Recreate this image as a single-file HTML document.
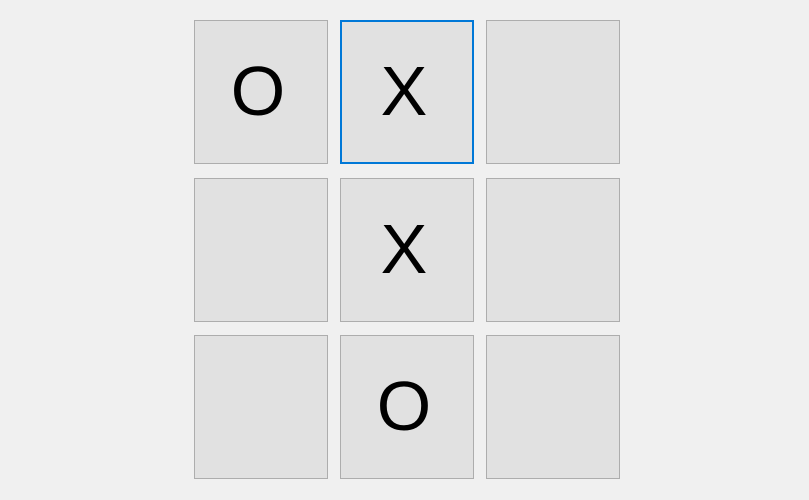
<!DOCTYPE html><html><head><style>
body{margin:0;width:809px;height:500px;background:#f0f0f0;position:relative;overflow:hidden;font-family:"Liberation Sans",sans-serif}
.b{position:absolute;width:134px;height:144px;box-sizing:border-box;border:1px solid #adadad;background:#e1e1e1;display:flex;align-items:center;justify-content:center;font-size:70px;color:#000;line-height:1;padding-right:6px;padding-bottom:2px}
.f{border:2px solid #0078d7}
</style></head><body>
<div class="b" style="left:194px;top:20px">O</div>
<div class="b f" style="left:340px;top:20px">X</div>
<div class="b" style="left:486px;top:20px"></div>
<div class="b" style="left:194px;top:178px"></div>
<div class="b" style="left:340px;top:178px">X</div>
<div class="b" style="left:486px;top:178px"></div>
<div class="b" style="left:194px;top:335px"></div>
<div class="b" style="left:340px;top:335px">O</div>
<div class="b" style="left:486px;top:335px"></div>
</body></html>
